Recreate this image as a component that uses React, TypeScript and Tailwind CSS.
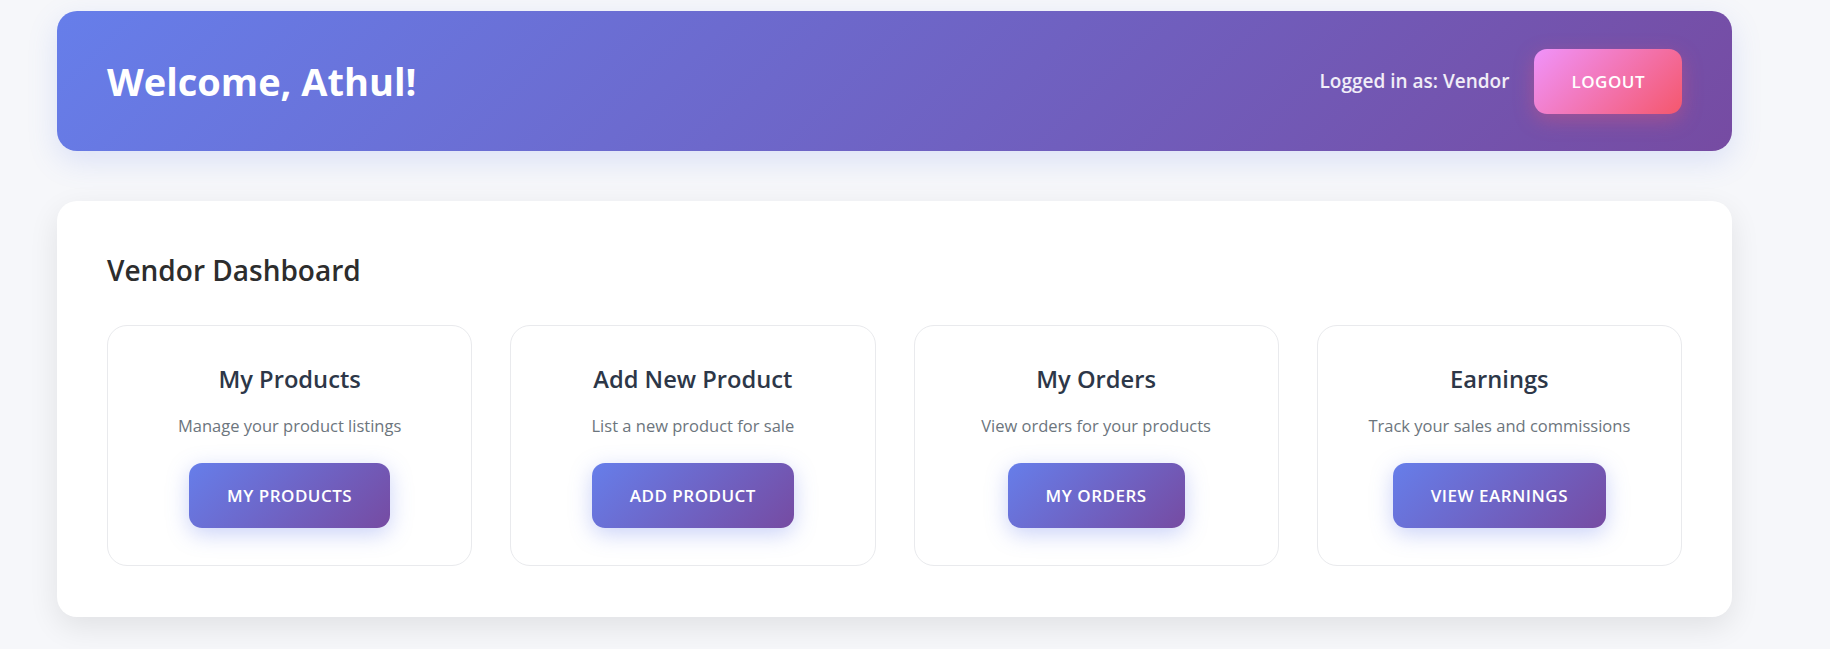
const cards = [
  { title: "My Products", text: "Manage your product listings", action: "My Products" },
  { title: "Add New Product", text: "List a new product for sale", action: "Add Product" },
  { title: "My Orders", text: "View orders for your products", action: "My Orders" },
  { title: "Earnings", text: "Track your sales and commissions", action: "View Earnings" },
];

function DashboardCard({ title, text, action }: { title: string; text: string; action: string }) {
  return (
    <div className="flex h-[241px] flex-col items-center rounded-[20px] border border-[#e9eaed] bg-white pt-[38px] text-center">
      <h3 className="text-[23.7px] leading-[30px] font-semibold text-[#2d3748]">{title}</h3>
      <p className="mt-[20px] text-[16.5px] leading-[24px] text-[#6c757d]">{text}</p>
      <button className="mt-[25px] rounded-[13px] bg-[linear-gradient(135deg,#667eea_0%,#764ba2_100%)] px-[38px] py-[19px] text-[17px] leading-[27px] font-semibold tracking-[0.5px] text-white uppercase shadow-[0_6px_22px_rgba(102,126,234,0.35)]">
        {action}
      </button>
    </div>
  );
}

export default function App() {
  return (
    <div className="min-h-screen bg-[#f6f7fa] pt-[11px] pl-[57px] font-['Open_Sans',sans-serif]">
      <div className="w-[1675px]">
        <header className="flex h-[140px] items-center justify-between rounded-[20px] bg-[linear-gradient(135deg,#667eea_0%,#764ba2_100%)] px-[50px] shadow-[0_10px_30px_rgba(102,126,234,0.18)]">
          <h1 className="text-[38px] leading-[50px] font-bold text-white">Welcome, Athul!</h1>
          <div className="flex items-center gap-[25px]">
            <span className="text-[19px] font-semibold text-white/90">Logged in as: Vendor</span>
            <button className="rounded-[13px] bg-[linear-gradient(135deg,#f093fb_0%,#f5576c_100%)] px-[37px] py-[19px] text-[17px] leading-[27px] font-semibold tracking-[0.5px] text-white uppercase shadow-[0_6px_20px_rgba(245,87,108,0.35)]">
              Logout
            </button>
          </div>
        </header>

        <main className="mt-[50px] h-[416px] rounded-[20px] bg-white px-[50px] pt-[52px] shadow-[0_10px_30px_rgba(0,0,0,0.09)]">
          <h2 className="text-[28px] leading-[34px] font-semibold text-[#2d2d2d]">Vendor Dashboard</h2>
          <div className="mt-[38px] grid grid-cols-4 gap-[38px]">
            {cards.map((c) => (
              <DashboardCard key={c.title} {...c} />
            ))}
          </div>
        </main>
      </div>
    </div>
  );
}
